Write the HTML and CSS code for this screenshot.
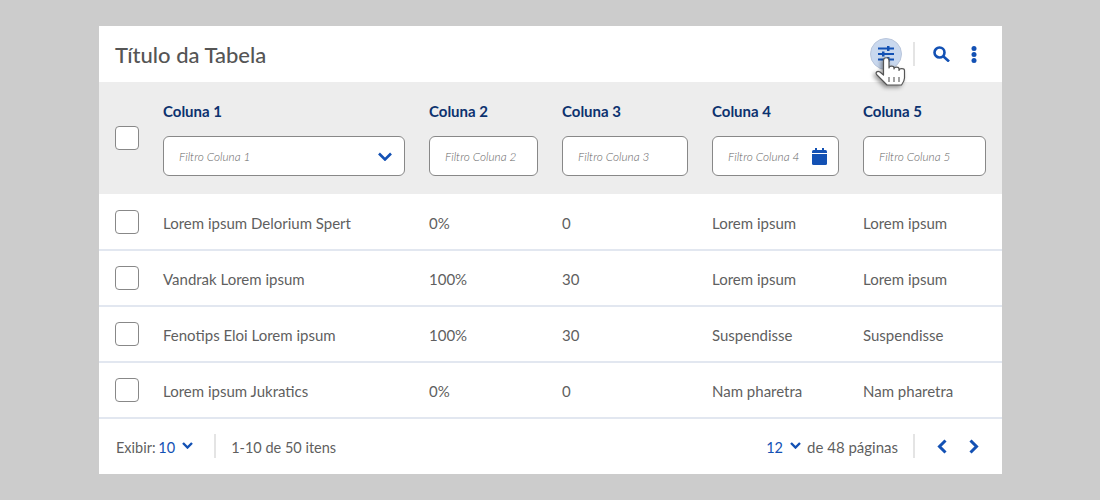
FILE: index.html
```html
<!DOCTYPE html>
<html lang="pt-BR">
<head>
  <meta charset="UTF-8">
  <title>Tabela</title>
  <link rel="stylesheet" href="styles.css">
</head>
<body>

<div class="card">
  <div class="top-bar">
    <h2>Título da Tabela</h2>
    <div class="top-actions">
      <span class="filter-btn">
        <svg width="18" height="16" viewBox="0 0 18 16" fill="#1351b4">
          <rect x="1" y="1.500" width="16" height="2"/>
          <rect x="1" y="7" width="16" height="2"/>
          <rect x="1" y="12.500" width="16" height="2"/>
          <rect x="10" y="0" width="2.500" height="5"/>
          <rect x="5" y="5.500" width="2.500" height="5"/>
          <rect x="10" y="11" width="2.500" height="5"/>
        </svg>
        <svg class="hand" width="33" height="30" viewBox="0 0 33 30">
          <path d="M8.500 3.500a2.750 2.750 0 0 1 5.500 0V11c0-2.500 5-2.500 5 0v1c0-2.500 5-2.500 5 0v1.500c0-2.500 5.500-2.500 5.500 0V21c0 3-1.500 5-3 7H12L2 18c-2-2 0-5 3-3l3.500 3z" fill="#fff" stroke="#555" stroke-width="1.200" stroke-linejoin="round"/>
          <path d="M14 20v5M19 20v5M24 20v5" stroke="#666" stroke-width="1.200"/>
        </svg>
      </span>
      <span class="v-line"></span>
      <svg class="icon-search" width="17" height="16" viewBox="0 0 17 16" fill="none" stroke="#1351b4" stroke-width="2.600">
        <circle cx="6.500" cy="6.500" r="5"/>
        <path d="M10.500 10.500l5.500 5"/>
      </svg>
      <svg class="icon-dots" width="6" height="17" viewBox="0 0 6 17" fill="#1351b4">
        <circle cx="3" cy="2.500" r="2.500"/>
        <circle cx="3" cy="8.500" r="2.500"/>
        <circle cx="3" cy="14.500" r="2.500"/>
      </svg>
    </div>
  </div>

  <div class="row head-row">
    <span class="check"></span>
    <div class="head-col">
      <b>Coluna 1</b>
      <div class="filter"><i>Filtro Coluna 1</i>
        <svg class="chevron-big" width="14" height="9" viewBox="0 0 14 9" fill="none" stroke="#1351b4" stroke-width="2.600"><path d="M1 1.500l6 6 6-6"/></svg>
      </div>
    </div>
    <div class="head-col">
      <b>Coluna 2</b>
      <div class="filter"><i>Filtro Coluna 2</i></div>
    </div>
    <div class="head-col">
      <b>Coluna 3</b>
      <div class="filter"><i>Filtro Coluna 3</i></div>
    </div>
    <div class="head-col">
      <b>Coluna 4</b>
      <div class="filter"><i>Filtro Coluna 4</i>
        <svg width="15" height="17" viewBox="0 0 15 17" fill="#1351b4">
          <rect x="0" y="2" width="15" height="15" rx="1.500"/>
          <rect x="3" y="0" width="2" height="4"/>
          <rect x="10" y="0" width="2" height="4"/>
          <rect x="0" y="5" width="15" height="1" fill="#fff"/>
        </svg>
      </div>
    </div>
    <div class="head-col">
      <b>Coluna 5</b>
      <div class="filter"><i>Filtro Coluna 5</i></div>
    </div>
  </div>

  <div class="row body-row">
    <span class="check"></span>
    <span class="cell">Lorem ipsum Delorium Spert</span><span class="cell">0%</span><span class="cell">0</span><span class="cell">Lorem ipsum</span><span class="cell">Lorem ipsum</span>
  </div>
  <div class="row body-row">
    <span class="check"></span>
    <span class="cell">Vandrak Lorem ipsum</span><span class="cell">100%</span><span class="cell">30</span><span class="cell">Lorem ipsum</span><span class="cell">Lorem ipsum</span>
  </div>
  <div class="row body-row">
    <span class="check"></span>
    <span class="cell">Fenotips Eloi Lorem ipsum</span><span class="cell">100%</span><span class="cell">30</span><span class="cell">Suspendisse</span><span class="cell">Suspendisse</span>
  </div>
  <div class="row body-row">
    <span class="check"></span>
    <span class="cell">Lorem ipsum Jukratics</span><span class="cell">0%</span><span class="cell">0</span><span class="cell">Nam pharetra</span><span class="cell">Nam pharetra</span>
  </div>

  <div class="footer">
    <div class="footer-side">
      <span class="foot-text show-count">Exibir: <a>10</a></span>
      <svg class="chevron-small" width="11" height="7" viewBox="0 0 11 7" fill="none" stroke="#1351b4" stroke-width="2.400"><path d="M1 1l4.500 4.500L10 1"/></svg>
      <span class="v-line"></span>
      <span class="foot-text">1-10 de 50 itens</span>
    </div>
    <div class="footer-side">
      <a class="foot-text">12</a>
      <svg class="chevron-small" width="11" height="7" viewBox="0 0 11 7" fill="none" stroke="#1351b4" stroke-width="2.400"><path d="M1 1l4.500 4.500L10 1"/></svg>
      <span class="foot-text pages">de 48 páginas</span>
      <span class="v-line"></span>
      <svg class="page-arrow" width="10" height="15" viewBox="0 0 10 15" fill="none" stroke="#1351b4" stroke-width="3"><path d="M8.500 1.500l-6 6 6 6"/></svg>
      <svg class="page-arrow" width="10" height="15" viewBox="0 0 10 15" fill="none" stroke="#1351b4" stroke-width="3"><path d="M1.500 1.500l6 6-6 6"/></svg>
    </div>
  </div>
</div>

</body>
</html>
```

FILE: styles.css
```css
body {
  font-family: 'Lato', 'Open Sans', sans-serif;
  background-color: #cccccc;
  margin: 0;
  padding: 26px 98px 26px 99px;
  color: #5f5f5f;
  font-size: 15px;
}

.card {
  background-color: #fff;
  width: 903px;
}

.top-bar {
  height: 56px;
  display: flex;
  justify-content: space-between;
  align-items: center;
  padding: 0 25px 0 16px;
}

h2 {
  margin: 0;
  font-size: 22px;
  font-weight: 500;
  color: #555;
}

.top-actions {
  display: flex;
  align-items: center;
}

.filter-btn {
  position: relative;
  width: 32px;
  height: 32px;
  border-radius: 50%;
  background-color: #c9d8ee;
  border: 1px solid #b9c6dc;
  box-sizing: border-box;
  display: flex;
  align-items: center;
  justify-content: center;
}

.hand {
  position: absolute;
  left: 4px;
  top: 18px;
  filter: drop-shadow(-2px 2px 2px rgba(0, 0, 0, 0.4));
}

.v-line {
  width: 2px;
  height: 24px;
  background-color: #e4e4e4;
}

.top-actions .v-line {
  margin: 0 18px 0 11px;
}

.icon-dots {
  margin-left: 21px;
}

.row {
  display: grid;
  grid-template-columns: 24px 242px 109px 126px 127px 123px;
  column-gap: 24px;
  padding: 0 16px;
  align-items: center;
}

.head-row {
  height: 112px;
  background-color: #ededed;
}

.head-col {
  padding-top: 2px;
}

.head-col b {
  display: block;
  color: #0c326f;
  font-size: 15px;
  font-weight: 700;
  margin-bottom: 16px;
}

.filter {
  height: 40px;
  box-sizing: border-box;
  border: 1px solid #888;
  border-radius: 6px;
  background-color: #fff;
  display: flex;
  align-items: center;
  justify-content: space-between;
  padding: 0 11px 0 15px;
}

.filter i {
  font-size: 11.800px;
  font-weight: 300;
  color: #666;
  white-space: nowrap;
}

.chevron-big {
  margin-right: 1px;
}

.check {
  width: 24px;
  height: 24px;
  box-sizing: border-box;
  border: 1px solid #888;
  border-radius: 4px;
  background-color: #fff;
}

.body-row {
  height: 56px;
  box-shadow: 0 1px 0 #e2e7f0, inset 0 -1px 0 #e2e7f0;
}

.cell {
  padding-top: 1px;
}

.footer {
  height: 56px;
  display: flex;
  justify-content: space-between;
  align-items: center;
  padding: 0 23px 0 17px;
  font-size: 14.500px;
}

.footer-side {
  display: flex;
  align-items: center;
}

.foot-text {
  padding-top: 2px;
}

.show-count {
  word-spacing: -1px;
}

.pages {
  font-size: 15px;
}

.footer a {
  color: #1351b4;
}

.footer .v-line {
  margin: 0 15px;
}

.chevron-small {
  margin: 0 6px 1px 7px;
}

.page-arrow {
  margin-left: 7px;
}

.page-arrow + .page-arrow {
  margin-left: 22px;
}
```
